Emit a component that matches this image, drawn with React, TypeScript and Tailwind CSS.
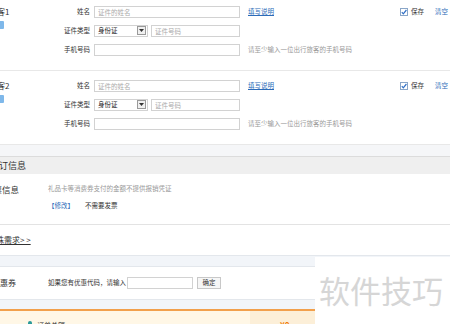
import React from "react";

function CheckBox() {
  return (
    <svg width="8" height="8" viewBox="0 0 8 8" className="shrink-0">
      <rect x="0.5" y="0.5" width="7" height="7" fill="#fff" stroke="#8aa6c8" />
      <path d="M1.8 4.2 L3.3 5.8 L6.4 2" fill="none" stroke="#2f6fc6" strokeWidth="1.2" />
    </svg>
  );
}

function SelectArrow() {
  return (
    <span className="ml-auto mr-[1px] flex h-[9px] w-[9px] items-center justify-center border border-[#9a9a9a] bg-[#f0f0f0]">
      <svg width="5" height="3" viewBox="0 0 5 3">
        <path d="M0 0 L5 0 L2.5 3 Z" fill="#333" />
      </svg>
    </span>
  );
}

const inputCls =
  "h-[12px] border border-[#d2d2d2] bg-white px-[3px] text-[6.5px] text-[#333] outline-none placeholder:text-[#aaa]";

function Passenger({ n, first }: { n: number; first?: boolean }) {
  return (
    <div className={first ? "-mt-[3px] flex border-b border-[#e8e8e8] pb-[11px] pt-[5px]" : "flex border-b border-[#e8e8e8] pb-[11px] pt-[5px]"}>
      <div className="w-[60px] shrink-0 pl-[19px]">
        <div className="flex h-[19px] items-center text-[8px] text-[#333]">旅客{n}</div>
        <div className="ml-[7px] h-[8px] w-[8px] rounded-[1px] bg-[#7fb8ea]" />
      </div>
      <div className="flex-1">
        <div className="flex h-[19px] items-center">
          <span className="w-[64px] pr-[4px] text-right text-[6.5px] text-[#333]">姓名</span>
          <input className={`${inputCls} w-[146px]`} placeholder="证件的姓名" />
          <a className="ml-[8px] text-[6.5px] text-[#2c6bb8] underline">填写说明</a>
          <span className="ml-auto mr-[2px] flex items-center">
            <CheckBox />
            <span className="ml-[3px] text-[6.5px] text-[#333]">保存</span>
            <a className="ml-[11px] text-[6.5px] text-[#2c6bb8]">清空</a>
          </span>
        </div>
        <div className="flex h-[19px] items-center">
          <span className="w-[64px] pr-[4px] text-right text-[6.5px] text-[#333]">证件类型</span>
          <div className="flex h-[12px] w-[54px] items-center border border-[#d2d2d2] bg-white pl-[3px] text-[6.5px] text-[#222]">
            身份证
            <SelectArrow />
          </div>
          <input className={`${inputCls} ml-[3px] w-[89px]`} placeholder="证件号码" />
        </div>
        <div className="flex h-[19px] items-center">
          <span className="w-[64px] pr-[4px] text-right text-[6.5px] text-[#333]">手机号码</span>
          <input className={`${inputCls} w-[146px]`} />
          <span className="ml-[8px] text-[6.5px] text-[#999]">请至少输入一位出行旅客的手机号码</span>
        </div>
      </div>
    </div>
  );
}

export default function App() {
  return (
    <div className="relative h-[324px] w-[450px] overflow-hidden bg-white font-['Noto_Sans_CJK_SC','Liberation_Sans',sans-serif]">
      <div className="-ml-[30px] w-[480px]">
        <Passenger n={1} first />
        <Passenger n={2} />

        <div className="h-[12px] border-b border-[#dcdcdc] bg-[#f5f6f8]" />
        <div className="flex h-[17px] items-center bg-[#efefef] pl-[20px] text-[9px] text-[#333]">预订信息</div>

        <div className="border-b border-[#e3e3e3] pb-[10px] pt-[7px]">
          <div className="flex h-[16px] items-center">
            <span className="w-[78px] shrink-0 pl-[15px] text-[8.5px] text-[#333]">发票信息</span>
            <span className="text-[6.5px] text-[#999]">礼品卡等消费券支付的金额不提供报销凭证</span>
          </div>
          <div className="flex h-[17px] items-center">
            <span className="w-[78px] shrink-0" />
            <a className="text-[6.5px] text-[#2c6bb8]">【修改】</a>
            <span className="ml-[11px] text-[6.5px] text-[#333]">不需要发票</span>
          </div>
        </div>

        <div className="flex h-[30px] items-center pl-[18px]">
          <a className="text-[8px] text-[#333] underline">特殊需求&gt; &gt;</a>
        </div>

        <div className="h-[12px] border-y border-[#e3e7ec] bg-[#f2f5f9]" />
        <div className="flex h-[33px] items-center border-b border-[#e3e7ec]">
          <span className="w-[78px] shrink-0 pl-[22px] text-[8px] text-[#333]">优惠券</span>
          <span className="text-[6.5px] text-[#333]">如果您有优惠代码，请输入</span>
          <input className={`${inputCls} ml-[1px] w-[66px]`} />
          <button className="ml-[4px] h-[12px] w-[24px] border border-[#c8c8c8] bg-[#f6f6f6] text-[6.5px] text-[#333]">确定</button>
        </div>

        <div className="h-[11px] border-b-2 border-[#f2a04c] bg-[#f2f5f9]" />
        <div className="flex h-[24px] bg-[#fff7e6]">
          <div className="flex flex-1 items-start pl-[58px] pt-[9px]">
            <span className="mt-[1px] h-[6px] w-[4px] rounded-full bg-[#2a9a9a]" />
            <span className="ml-[5px] text-[7px] text-[#333]">订单总额</span>
          </div>
          <div className="w-[65px] bg-[#fcefd8] pl-[30px] pt-[8px] text-[8px] font-bold text-[#f07800]">¥0</div>
          <div className="w-[135px]" />
        </div>
      </div>

      <div className="absolute left-[315px] top-[257px] h-[67px] w-[135px] bg-white pl-[4px] pt-[17px] text-[31px] leading-none text-[#d6d6d6]">
        软件技巧
      </div>
    </div>
  );
}
